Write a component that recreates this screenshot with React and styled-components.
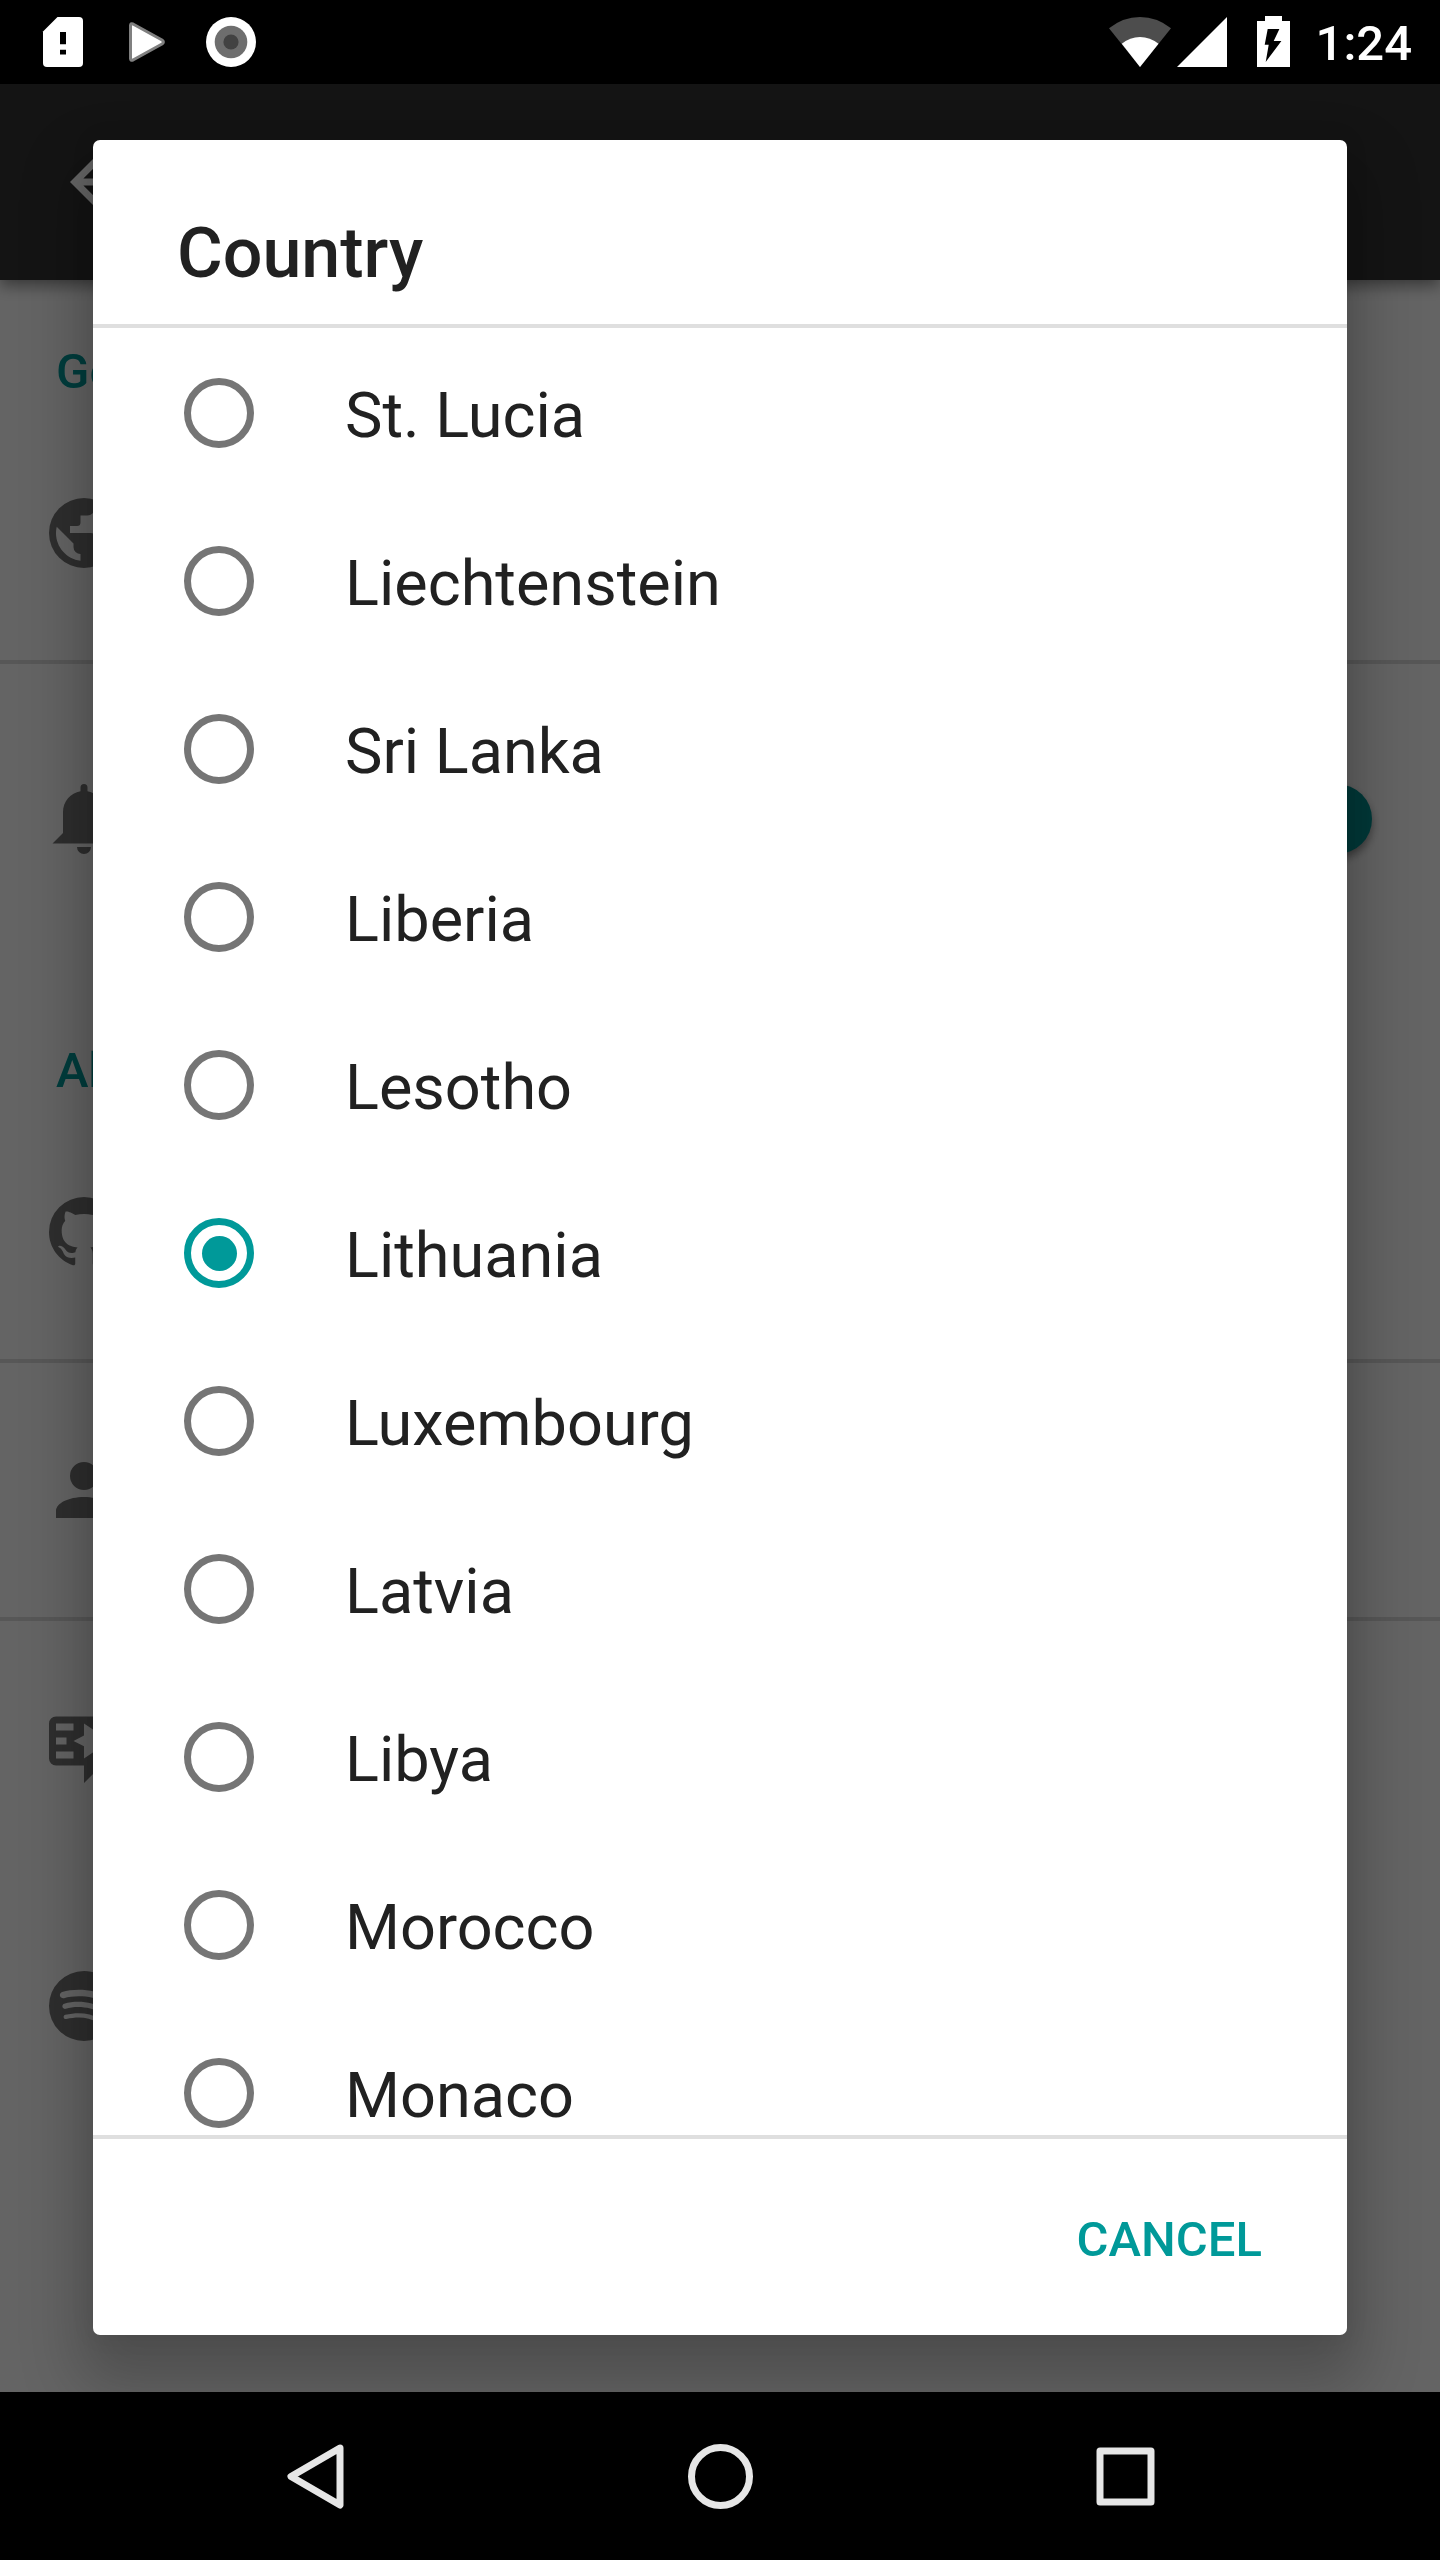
import React from "react";
import styled, { createGlobalStyle } from "styled-components";

const GlobalStyle = createGlobalStyle`
  * { box-sizing: border-box; }
  body {
    margin: 0;
    background: #000;
    font-family: Roboto, "Noto Sans", sans-serif;
  }
`;

const Screen = styled.div`
  width: 1440px;
  height: 2560px;
  display: flex;
  flex-direction: column;
  background: #000;
  overflow: hidden;
`;

const StatusBar = styled.header`
  flex: 0 0 84px;
  display: flex;
  align-items: center;
  justify-content: space-between;
  padding: 0 28px 0 38px;
  background: #000;
`;

const Notifications = styled.div`
  display: flex;
  gap: 34px;
`;

const SystemIcons = styled.div`
  display: flex;
  align-items: center;
`;

const StatusIcon = styled.svg`
  display: block;
  width: ${(p) => p.$width}px;
  height: 52px;
  margin-right: ${(p) => p.$after || 0}px;
`;

const Clock = styled.span`
  width: 98px;
  text-align: right;
  font-size: 49px;
  line-height: 58px;
  font-weight: 500;
  color: #fff;
  padding-top: 3px;
`;

const Viewport = styled.main`
  flex: 1;
  min-height: 0;
  display: grid;
  grid-template: minmax(0, 1fr) / minmax(0, 1fr);
  overflow: hidden;
`;

const Settings = styled.section`
  grid-area: 1 / 1;
  min-width: 0;
  display: flex;
  flex-direction: column;
  background: #fafafa;
`;

const Toolbar = styled.div`
  flex: 0 0 196px;
  display: flex;
  align-items: center;
  padding: 0 56px;
  background: #323232;
  box-shadow: 0 6px 14px rgba(0, 0, 0, 0.42);
`;

const SectionTitle = styled.h2`
  flex: none;
  margin: 0;
  height: ${(p) => p.$height}px;
  padding: 0 56px 5px;
  display: flex;
  align-items: flex-end;
  font-size: 49px;
  line-height: 58px;
  font-weight: 500;
  color: #009999;
`;

const SettingRow = styled.div`
  height: ${(p) => p.$height}px;
  flex: none;
  display: flex;
  align-items: center;
  justify-content: space-between;
  padding: 0 68px 0 42px;
  border-bottom: ${(p) => (p.$divider ? "4px solid #dadada" : "0")};
`;

const Glyph = styled.svg`
  display: block;
  width: 84px;
  height: 84px;
  fill: ${(p) => p.$color || "#737373"};
`;

const SwitchThumb = styled.span`
  width: 70px;
  height: 70px;
  border-radius: 50%;
  background: #009090;
  box-shadow: 0 5px 9px rgba(0, 0, 0, 0.4);
`;

const Scrim = styled.div`
  grid-area: 1 / 1;
  position: relative;
  padding: 56px 93px 57px;
  display: flex;
  background: rgba(0, 0, 0, 0.6);
`;

const Dialog = styled.section`
  flex: 1;
  min-height: 0;
  display: flex;
  flex-direction: column;
  background: #fff;
  border-radius: 7px;
  box-shadow:
    0 35px 60px 15px rgba(0, 0, 0, 0.22),
    0 0 24px rgba(0, 0, 0, 0.08);
`;

const DialogTitle = styled.h1`
  flex: 0 0 188px;
  margin: 0;
  padding: 72px 84px 0;
  font-size: 70px;
  line-height: 82px;
  font-weight: 500;
  color: #212121;
  border-bottom: 4px solid #dfdfdf;
`;

const Options = styled.div`
  flex: 1;
  min-height: 0;
  overflow: hidden;
  padding-top: 1px;
`;

const Option = styled.div`
  height: 168px;
  display: flex;
  align-items: center;
  padding: 0 91px;
  gap: 91px;
`;

const Radio = styled.span`
  width: 70px;
  height: 70px;
  flex: none;
  display: flex;
  align-items: center;
  justify-content: center;
  border: 7px solid ${(p) => (p.$checked ? "#009999" : "#757575")};
  border-radius: 50%;

  &::after {
    content: "";
    width: 35px;
    height: 35px;
    border-radius: 50%;
    background: ${(p) => (p.$checked ? "#009999" : "transparent")};
  }
`;

const OptionLabel = styled.span`
  padding-top: 5px;
  font-size: 63px;
  line-height: 74px;
  color: #212121;
`;

const Actions = styled.footer`
  flex: 0 0 200px;
  display: flex;
  align-items: center;
  justify-content: flex-end;
  padding: 5px 85px 0;
  border-top: 4px solid #dfdfdf;
`;

const TextButton = styled.button`
  border: 0;
  padding: 0;
  background: none;
  font: 500 49px/58px Roboto, "Noto Sans", sans-serif;
  color: #009999;
`;

const NavBar = styled.nav`
  flex: 0 0 168px;
  display: flex;
  align-items: center;
  justify-content: center;
  gap: 321px;
  background: #000;
`;

const NavIcon = styled.svg`
  display: block;
  width: 84px;
  height: 84px;
  fill: none;
  stroke: #e6e6e6;
  stroke-width: 7;
  stroke-linejoin: round;
`;

const icons = {
  back: "M20 11H7.83l5.59-5.59L12 4l-8 8 8 8 1.41-1.41L7.83 13H20v-2z",
  earth:
    "M17.9,17.39C17.64,16.59 16.89,16 16,16H15V13A1,1 0 0,0 14,12H8V10H10A1,1 0 0,0 11,9V7H13A2,2 0 0,0 15,5V4.59C17.93,5.77 20,8.64 20,12C20,14.08 19.2,15.97 17.9,17.39M11,19.93C7.05,19.44 4,16.08 4,12C4,11.38 4.08,10.78 4.21,10.21L9,15V16A2,2 0 0,0 11,18M12,2A10,10 0 0,0 2,12A10,10 0 0,0 12,22A10,10 0 0,0 22,12A10,10 0 0,0 12,2Z",
  bell: "M14,20A2,2 0 0,1 12,22A2,2 0 0,1 10,20H14M12,2A1,1 0 0,1 13,3V4.08C15.84,4.56 18,7.03 18,10V16L21,19H3L6,16V10C6,7.03 8.16,4.56 11,4.08V3A1,1 0 0,1 12,2Z",
  github:
    "M12,2A10,10 0 0,0 2,12C2,16.42 4.87,20.17 8.84,21.5C9.34,21.58 9.5,21.27 9.5,21C9.5,20.77 9.5,20.14 9.5,19.31C6.73,19.91 6.14,17.97 6.14,17.97C5.68,16.81 5.03,16.5 5.03,16.5C4.12,15.88 5.1,15.9 5.1,15.9C6.1,15.97 6.63,16.93 6.63,16.93C7.5,18.45 8.97,18 9.54,17.76C9.63,17.11 9.89,16.67 10.17,16.42C7.95,16.17 5.62,15.31 5.62,11.5C5.62,10.39 6,9.5 6.65,8.79C6.55,8.54 6.2,7.5 6.75,6.15C6.75,6.15 7.59,5.88 9.5,7.17C10.29,6.95 11.15,6.84 12,6.84C12.85,6.84 13.71,6.95 14.5,7.17C16.41,5.88 17.25,6.15 17.25,6.15C17.8,7.5 17.45,8.54 17.35,8.79C18,9.5 18.38,10.39 18.38,11.5C18.38,15.32 16.04,16.16 13.81,16.41C14.17,16.72 14.5,17.33 14.5,18.26C14.5,19.6 14.5,20.68 14.5,21C14.5,21.27 14.66,21.59 15.17,21.5C19.14,20.16 22,16.42 22,12A10,10 0 0,0 12,2Z",
  account:
    "M12,4A4,4 0 0,1 16,8A4,4 0 0,1 12,12A4,4 0 0,1 8,8A4,4 0 0,1 12,4M12,14C16.42,14 20,15.79 20,18V20H4V18C4,15.79 7.58,14 12,14Z",
  review:
    "M4,3H20A2,2 0 0,1 22,5V15A2,2 0 0,1 20,17H17L12,22V17H4A2,2 0 0,1 2,15V5A2,2 0 0,1 4,3M4,5V7H9V5ZM4,9V11H7V9ZM4,13V15H9V13ZM12,5V8.4L9,10L12,11.5V15L18,10.9V9Z",
  spotify:
    "M17.9,10.9C14.7,9 9.35,8.8 6.3,9.75C5.8,9.9 5.3,9.6 5.15,9.15C5,8.65 5.3,8.15 5.75,8C9.3,6.95 15.15,7.15 18.85,9.35C19.3,9.6 19.45,10.2 19.2,10.65C18.95,11 18.35,11.15 17.9,10.9M17.8,13.7C17.55,14.05 17.1,14.2 16.75,13.95C14.05,12.3 9.95,11.8 6.8,12.8C6.4,12.9 5.95,12.7 5.85,12.3C5.75,11.9 5.95,11.45 6.35,11.35C10,10.25 14.5,10.8 17.6,12.7C17.9,12.85 18.05,13.35 17.8,13.7M16.6,16.45C16.4,16.75 16.05,16.85 15.75,16.65C13.4,15.2 10.45,14.9 6.95,15.7C6.6,15.8 6.3,15.55 6.2,15.25C6.1,14.9 6.35,14.6 6.65,14.5C10.45,13.65 13.75,14 16.35,15.6C16.7,15.75 16.75,16.15 16.6,16.45M12,2A10,10 0 0,0 2,12A10,10 0 0,0 12,22A10,10 0 0,0 22,12C22,6.5 17.5,2 12,2Z",
};

function Icon({ name, color }) {
  return (
    <Glyph viewBox="0 0 24 24" $color={color} aria-hidden="true">
      <path fillRule="evenodd" d={icons[name]} />
    </Glyph>
  );
}

const countries = [
  "St. Lucia",
  "Liechtenstein",
  "Sri Lanka",
  "Liberia",
  "Lesotho",
  "Lithuania",
  "Luxembourg",
  "Latvia",
  "Libya",
  "Morocco",
  "Monaco",
];

function PhoneStatus() {
  return (
    <StatusBar>
      <Notifications>
        <StatusIcon $width={50} viewBox="38 16 50 52">
          <path
            fill="#fff"
            d="M57.500 17H79a4 4 0 0 1 4 4v42a4 4 0 0 1-4 4H47a4 4 0 0 1-4-4V31.500z"
          />
          <path fill="#000" d="M60 32h6v12.300h-6zM60 49.700h6v4.800h-6z" />
        </StatusIcon>
        <StatusIcon $width={50} viewBox="122 16 50 52">
          <path
            fill="#fff"
            stroke="#808080"
            strokeWidth="3"
            strokeLinejoin="round"
            d="M130.500 25.500q0-2.500 2.500-1.500L162 40q2.800 2 0 4L133 60q-2.500 1-2.500-1.500z"
          />
        </StatusIcon>
        <StatusIcon $width={50} viewBox="206 16 50 52">
          <circle cx="231" cy="42" r="25" fill="#fff" />
          <circle cx="231" cy="42" r="16.300" fill="#6e6e6e" />
          <circle cx="231" cy="42" r="7.600" fill="#424242" />
        </StatusIcon>
      </Notifications>
      <SystemIcons>
        <StatusIcon $width={62} $after={6} viewBox="1109 16 62 52">
          <path fill="#4d4d4d" d="M1109 28.300Q1123 17 1140 17T1171 28.300L1140 67z" />
          <path fill="#fff" d="M1121.800 43.800Q1130 37 1140 37T1158.500 43.800L1140 67z" />
        </StatusIcon>
        <StatusIcon $width={50} $after={30} viewBox="1177 16 50 52">
          <path fill="#fff" d="M1227 17V67H1177z" />
        </StatusIcon>
        <StatusIcon $width={33} $after={24} viewBox="1257 16 33 52">
          <path
            fill="#fff"
            fillRule="evenodd"
            d="M1265 16h17v5h8v46h-33V21h8zM1267.700 29l-3 15.700h4l-3 17.300 15.700-21h-7.700l5.700-12z"
          />
        </StatusIcon>
        <Clock>1:24</Clock>
      </SystemIcons>
    </StatusBar>
  );
}

function SettingsPage() {
  return (
    <Settings>
      <Toolbar>
        <Icon name="back" color="#fff" />
      </Toolbar>
      <SectionTitle $height={126}>General</SectionTitle>
      <SettingRow $height={258} $divider>
        <Icon name="earth" />
      </SettingRow>
      <SettingRow $height={310}>
        <Icon name="bell" />
        <SwitchThumb />
      </SettingRow>
      <SectionTitle $height={131}>About</SectionTitle>
      <SettingRow $height={258} $divider>
        <Icon name="github" />
      </SettingRow>
      <SettingRow $height={258} $divider>
        <Icon name="account" />
      </SettingRow>
      <SettingRow $height={254}>
        <Icon name="review" />
      </SettingRow>
      <SettingRow $height={262}>
        <Icon name="spotify" />
      </SettingRow>
    </Settings>
  );
}

function CountryDialog() {
  return (
    <Scrim>
      <Dialog role="dialog" aria-labelledby="dialog-title">
        <DialogTitle id="dialog-title">Country</DialogTitle>
        <Options role="radiogroup">
          {countries.map((country) => {
            const checked = country === "Lithuania";
            return (
              <Option key={country} role="radio" aria-checked={checked}>
                <Radio $checked={checked} />
                <OptionLabel>{country}</OptionLabel>
              </Option>
            );
          })}
        </Options>
        <Actions>
          <TextButton type="button">CANCEL</TextButton>
        </Actions>
      </Dialog>
    </Scrim>
  );
}

export default function App() {
  return (
    <Screen>
      <GlobalStyle />
      <PhoneStatus />
      <Viewport>
        <SettingsPage />
        <CountryDialog />
      </Viewport>
      <NavBar>
        <NavIcon viewBox="0 0 84 84">
          <path d="M67 14L18 42.500L67 71Z" />
        </NavIcon>
        <NavIcon viewBox="0 0 84 84">
          <circle cx="42.500" cy="42.500" r="29" />
        </NavIcon>
        <NavIcon viewBox="0 0 84 84">
          <rect x="17" y="17" width="51" height="51" />
        </NavIcon>
      </NavBar>
    </Screen>
  );
}
